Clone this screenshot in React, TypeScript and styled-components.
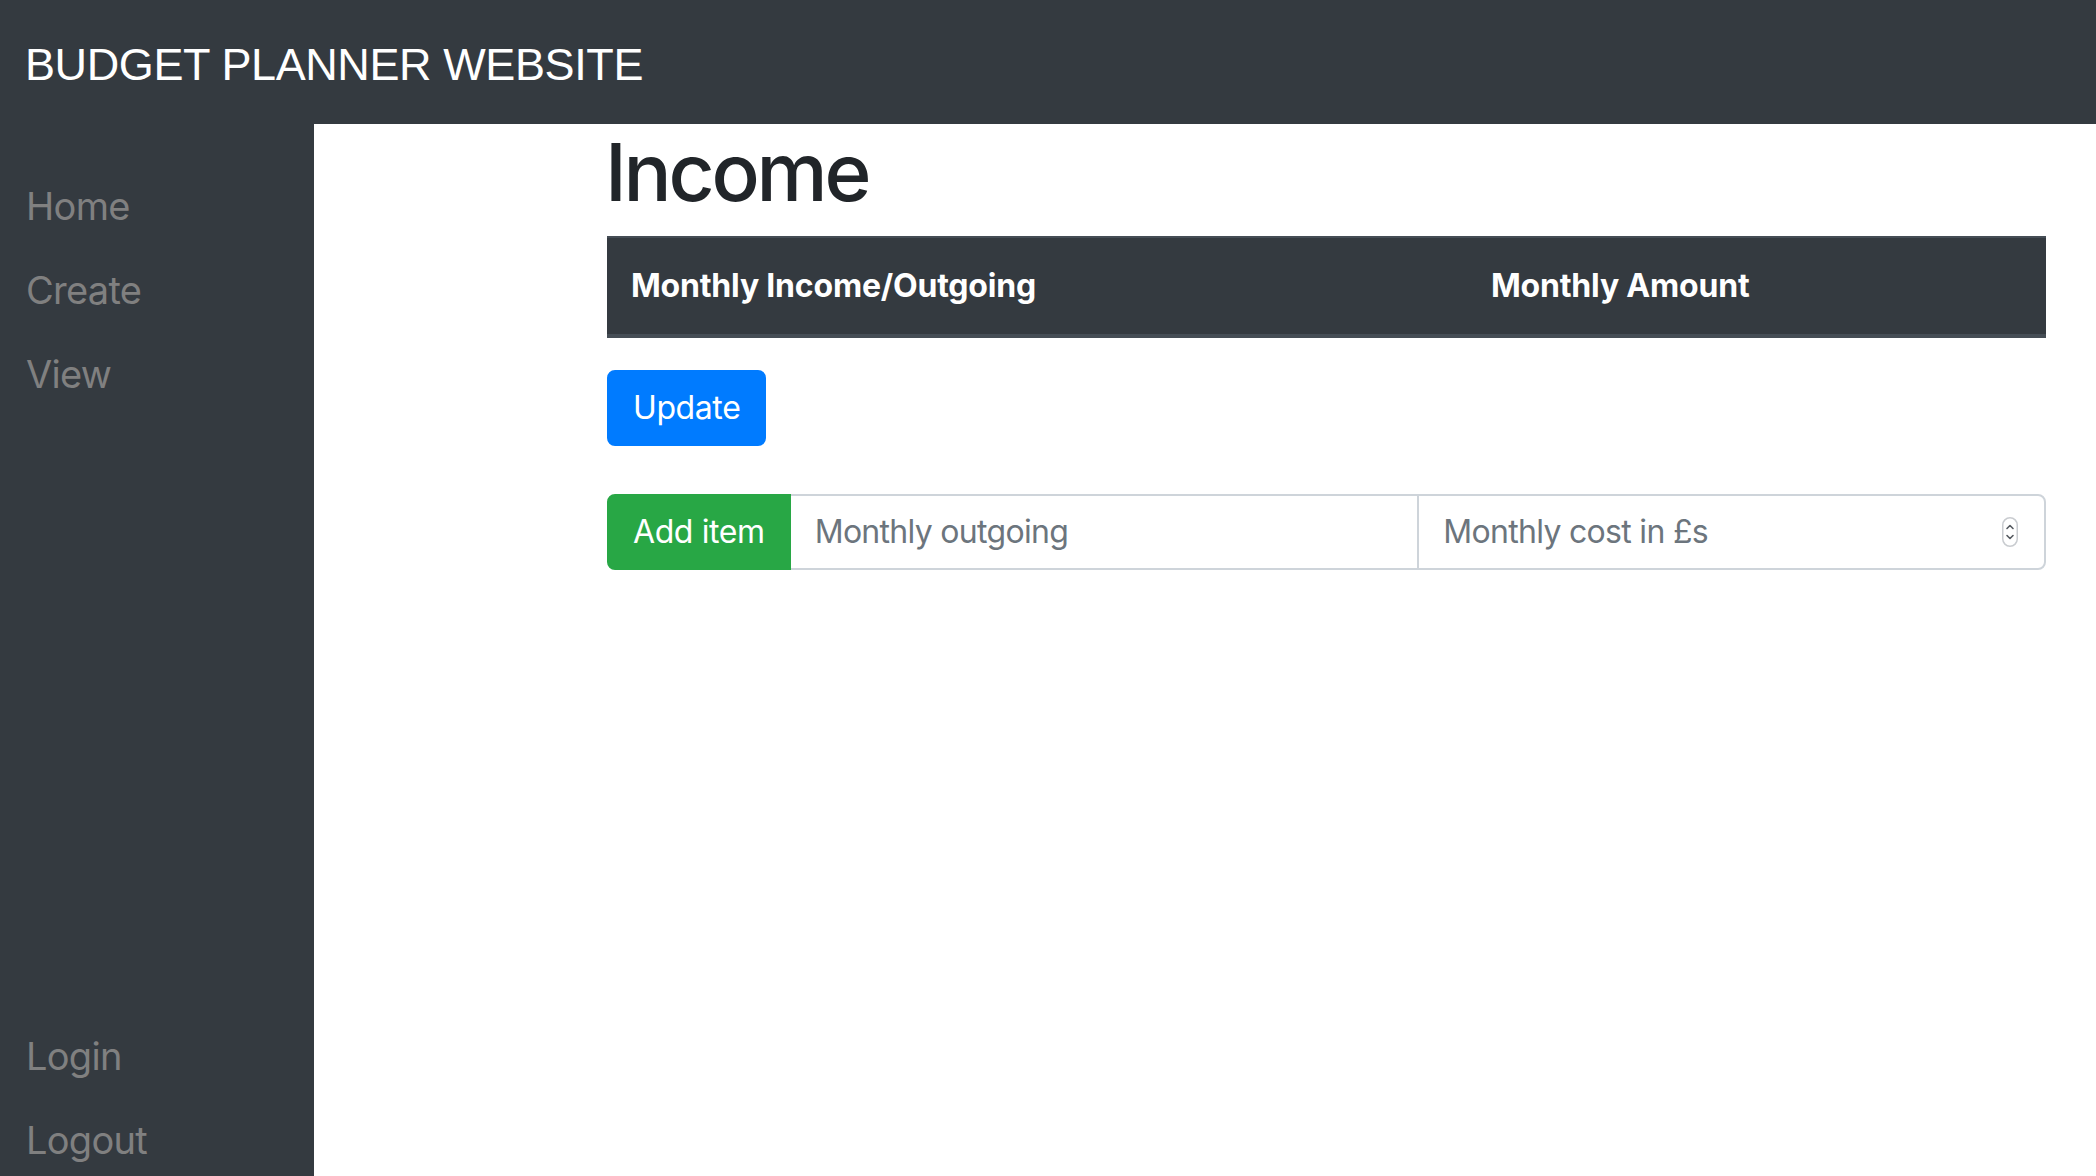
import React from "react";
import styled, { createGlobalStyle } from "styled-components";

const GlobalStyle = createGlobalStyle`
  html, body {
    margin: 0;
    padding: 0;
    background: #ffffff;
    overflow: hidden;
  }
  * { box-sizing: border-box; }
  body {
    font-family: Inter, "Noto Sans", "Liberation Sans", sans-serif;
    color: #212529;
  }
`;

const Page = styled.div`
  display: flex;
  flex-direction: column;
  height: 100vh;
`;

const TopBar = styled.header`
  height: 124px;
  flex: 0 0 124px;
  background: #343a40;
  display: flex;
  align-items: center;
  padding: 4px 0 0 25px;
`;

const Brand = styled.div`
  font-family: "Liberation Sans", Arial, sans-serif;
  font-size: 45px;
  line-height: 1;
  color: #ffffff;
  letter-spacing: -0.4px;
`;

const Body = styled.div`
  flex: 1;
  display: flex;
  min-height: 0;
`;

const Sidebar = styled.nav`
  width: 314px;
  flex: 0 0 314px;
  background: #343a40;
  display: flex;
  flex-direction: column;
  justify-content: space-between;
  padding-top: 40px;
`;

const NavGroup = styled.div<{ $bottom?: boolean }>`
  display: flex;
  flex-direction: column;
  margin-bottom: ${(p) => (p.$bottom ? "-6px" : "0")};
`;

const NavLink = styled.a`
  display: block;
  padding: 12px 0 12px 26px;
  font-size: 38px;
  line-height: 60px;
  color: #808080;
  text-decoration: none;
  letter-spacing: -0.7px;
`;

const Main = styled.main`
  flex: 1;
  background: #ffffff;
  padding: 0 50px 0 293px;
`;

const Title = styled.h1`
  margin: 0 0 16px -2px;
  font-size: 80px;
  line-height: 96px;
  font-weight: 500;
  color: #212529;
  letter-spacing: -3.2px;
`;

const Table = styled.table`
  width: 100%;
  border-collapse: collapse;
  margin-bottom: 32px;
`;

const HeadCell = styled.th<{ $w?: string }>`
  width: ${(p) => p.$w || "auto"};
  background: #343a40;
  color: #ffffff;
  text-align: left;
  font-size: 32px;
  line-height: 48px;
  font-weight: 700;
  padding: 24px;
  border-top: 2px solid #454d55;
  border-bottom: 4px solid #454d55;
  letter-spacing: -0.2px;
`;

const Button = styled.button<{ $variant: "primary" | "success" }>`
  font-family: inherit;
  font-size: 32px;
  line-height: 48px;
  padding: 12px 24px;
  border: 2px solid ${(p) => (p.$variant === "primary" ? "#007bff" : "#28a745")};
  background: ${(p) => (p.$variant === "primary" ? "#007bff" : "#28a745")};
  color: #ffffff;
  border-radius: 8px;
  letter-spacing: -0.4px;
  cursor: pointer;
`;

const UpdateRow = styled.div`
  display: flex;
  margin-bottom: 48px;
`;

const InputGroup = styled.div`
  display: flex;
  align-items: stretch;
  width: 100%;
  height: 76px;
`;

const GroupButton = styled(Button)`
  flex: 0 0 auto;
  border-top-right-radius: 0;
  border-bottom-right-radius: 0;
`;

const Field = styled.div<{ $last?: boolean }>`
  position: relative;
  flex: 1 1 0;
  min-width: 0;
  display: flex;
  margin-left: ${(p) => (p.$last ? "-2px" : "0")};
`;

const Input = styled.input<{ $last?: boolean }>`
  width: 100%;
  font-family: inherit;
  font-size: 32px;
  line-height: 48px;
  padding: 12px 24px;
  border: 2px solid #ced4da;
  border-left-width: ${(p) => (p.$last ? "2px" : "0")};
  border-radius: ${(p) => (p.$last ? "0 8px 8px 0" : "0")};
  color: #495057;
  background: #ffffff;
  outline: none;
  letter-spacing: -0.7px;
  &::placeholder {
    color: #6c757d;
    opacity: 1;
  }
`;

const Spinner = styled.svg`
  position: absolute;
  right: 28px;
  top: 50%;
  transform: translateY(-50%);
  width: 16px;
  height: 30px;
  pointer-events: none;
`;

export default function App() {
  return (
    <>
      <GlobalStyle />
      <Page>
        <TopBar>
          <Brand>BUDGET PLANNER WEBSITE</Brand>
        </TopBar>
        <Body>
          <Sidebar>
            <NavGroup>
              <NavLink href="#">Home</NavLink>
              <NavLink href="#">Create</NavLink>
              <NavLink href="#">View</NavLink>
            </NavGroup>
            <NavGroup $bottom>
              <NavLink href="#">Login</NavLink>
              <NavLink href="#">Logout</NavLink>
            </NavGroup>
          </Sidebar>
          <Main>
            <Title>Income</Title>
            <Table>
              <thead>
                <tr>
                  <HeadCell $w="860px">Monthly Income/Outgoing</HeadCell>
                  <HeadCell>Monthly Amount</HeadCell>
                </tr>
              </thead>
            </Table>
            <UpdateRow>
              <Button $variant="primary">Update</Button>
            </UpdateRow>
            <InputGroup>
              <GroupButton $variant="success">Add item</GroupButton>
              <Field>
                <Input type="text" placeholder="Monthly outgoing" />
              </Field>
              <Field $last>
                <Input $last type="text" placeholder="Monthly cost in £s" />
                <Spinner viewBox="0 0 16 30">
                  <rect x="0.75" y="0.75" width="14.5" height="28.5" rx="7.25" fill="#ffffff" stroke="#c9ccd0" strokeWidth="1.5" />
                  <path d="M5 11.5 L8 8.5 L11 11.5" fill="none" stroke="#555a60" strokeWidth="1.6" strokeLinecap="round" strokeLinejoin="round" />
                  <path d="M5 18.5 L8 21.5 L11 18.5" fill="none" stroke="#555a60" strokeWidth="1.6" strokeLinecap="round" strokeLinejoin="round" />
                </Spinner>
              </Field>
            </InputGroup>
          </Main>
        </Body>
      </Page>
    </>
  );
}
